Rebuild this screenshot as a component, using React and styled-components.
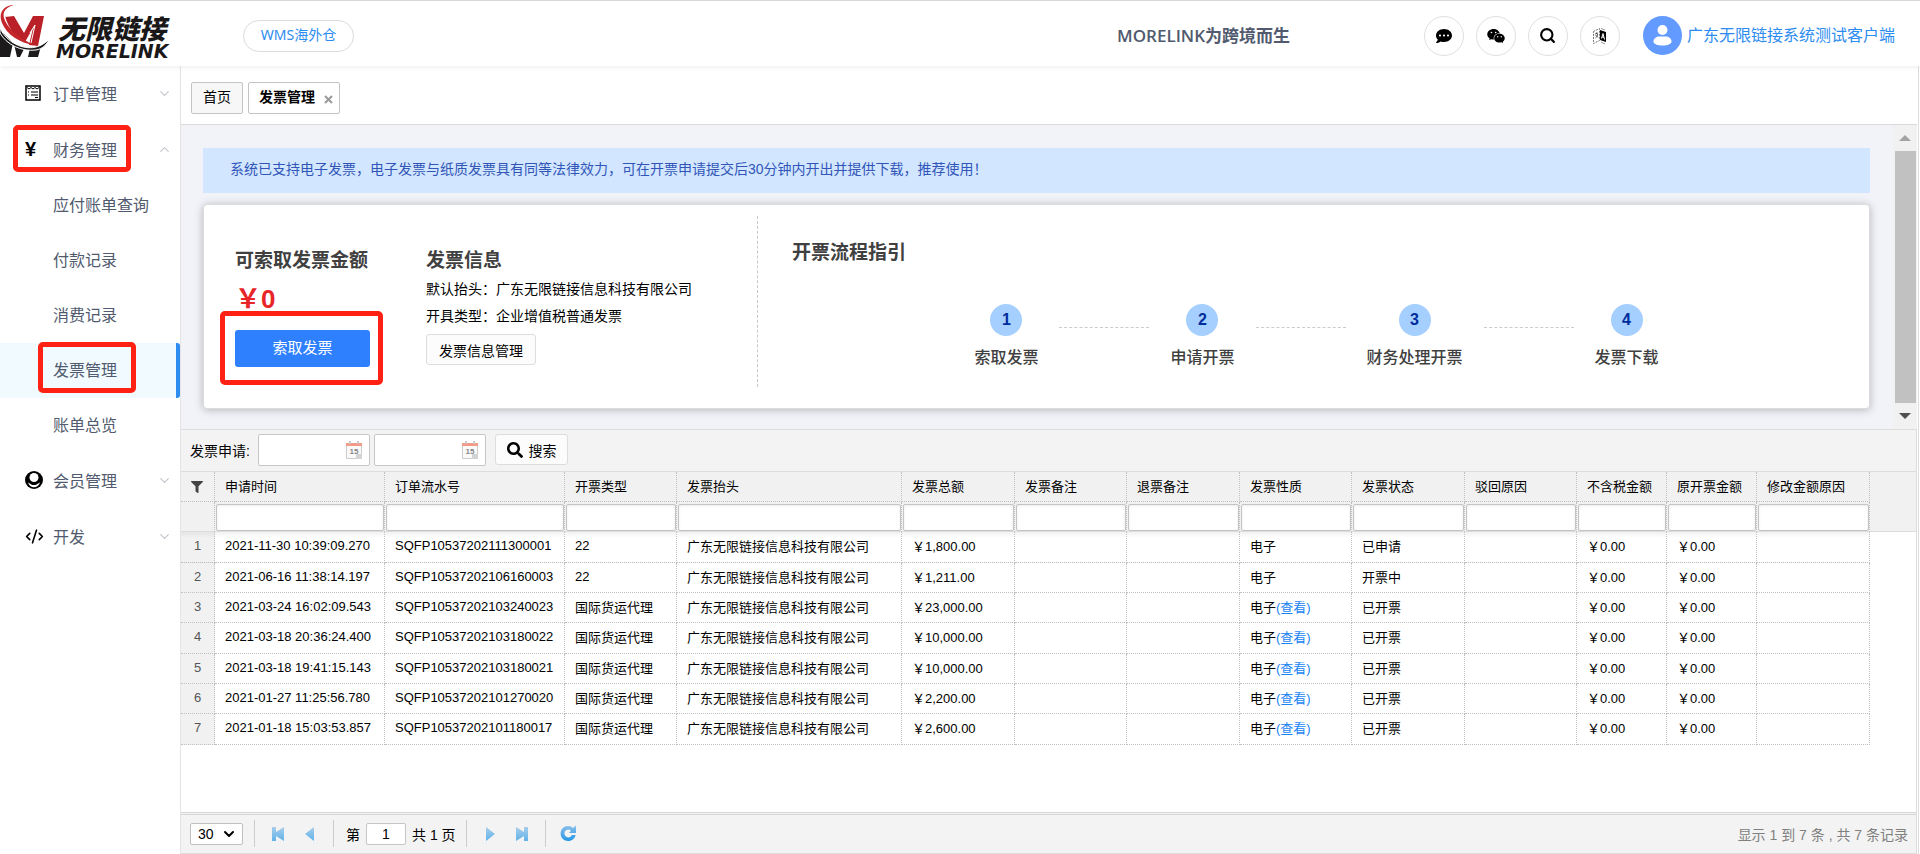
import React from 'react'
import styled, { createGlobalStyle } from 'styled-components'
import { FaCommentDots, FaFilter, FaSearch } from 'react-icons/fa'
import { AiFillWechat } from 'react-icons/ai'
import { ChevronDown, ChevronUp, CodeXml, Search } from 'lucide-react'

const GlobalStyle = createGlobalStyle `
  * {
    box-sizing: border-box;
  }

  body {
    margin: 0;
    background-color: #ffffff;
    color: #000000;
    font-family: "Liberation Sans", "Noto Sans CJK SC", sans-serif;
    font-size: 14px;
  }

  button, input, select {
    font-family: inherit;
    font-size: 14px;
    color: inherit;
  }

  h1, h2, p, ul, ol {
    margin: 0;
    padding: 0;
  }

  ul, ol {
    list-style: none;
  }

  a {
    text-decoration: none;
  }
`

const Page = styled.div `
  display: flex;
  flex-direction: column;
  min-height: 100vh;
`

const Header = styled.header `
  display: flex;
  align-items: center;
  height: 66px;
  padding-right: 25px;
  border-top: 1px solid #d8d8d8;
  position: relative;
  z-index: 1;
  box-shadow: 0 3px 3px rgba(0, 0, 0, 0.04);
  background-color: #ffffff;
`

const Logo = styled.svg `
  display: block;
  width: 176px;
  height: 64px;
`

const WmsLink = styled.a `
  margin-top: 4px;
  margin-left: 67px;
  width: 111px;
  height: 32px;
  line-height: 28px;
  border: 1px solid #dcdcdc;
  border-radius: 16px;
  text-align: center;
  color: #2d8cf0;
  font-family: "Noto Sans", "Noto Sans CJK SC", sans-serif;
`

const Slogan = styled.strong `
  margin-left: auto;
  margin-right: 134px;
  margin-top: 2px;
  font-family: "Open Sans", "Noto Sans CJK SC", sans-serif;
  font-size: 17px;
  font-weight: 600;
  color: #515a6e;
`

const Tools = styled.div `
  display: flex;
  gap: 12px;
  margin-top: 4px;
`

const ToolButton = styled.button `
  display: flex;
  align-items: center;
  justify-content: center;
  width: 40px;
  height: 40px;
  padding: 0;
  border: 1px solid #dfdfdf;
  border-radius: 50%;
  background-color: #ffffff;
`

const Account = styled.a `
  display: flex;
  align-items: center;
  gap: 5px;
  margin-left: 23px;
  margin-top: 4px;
  font-size: 16px;
  line-height: 24px;
  color: #2d8cf0;

  svg {
    display: block;
  }
`

const Body = styled.div `
  display: flex;
  flex: 1;
`

const Sidebar = styled.nav `
  flex: none;
  width: 180px;
`

const MenuLink = styled.a `
  display: flex;
  align-items: center;
  position: relative;
  height: ${props => props.$sub ? '55px' : '56px'};
  padding: ${props => props.$sub ? '0 9px 4px 53px' : '0 8px 2px 25px'};
  border-right: ${props => props.$active ? '4px solid #2d8cf0' : 'none'};
  border-radius: ${props => props.$active ? '0 3px 3px 0' : '0'};
  background-color: ${props => props.$active ? '#f0faff' : 'transparent'};
  color: #515a6e;
  font-size: 16px;
`

const MenuIcon = styled.span `
  display: flex;
  flex: none;
  width: 28px;
  color: #000000;
  font-size: 20px;
  font-weight: 700;
`

const MenuArrow = styled.span `
  display: flex;
  margin-left: auto;
  color: #c5c8ce;
`

const Mark = styled.span `
  position: absolute;
  top: ${props => props.$top};
  left: ${props => props.$left};
  width: ${props => props.$width};
  height: ${props => props.$height};
  border: 5px solid #ff2113;
  border-radius: 5px;
  pointer-events: none;
`

const Main = styled.main `
  display: flex;
  flex: 1;
  flex-direction: column;
  min-width: 0;
  border-left: 1px solid #e4e4e4;
  border-right: 1px solid #dddddd;
  margin-right: 1px;
  padding-right: 1px;
`

const Tabs = styled.div `
  display: flex;
  gap: 5px;
  padding: 16px 10px 10px;
  border-bottom: 1px solid #dadada;
`

const Tab = styled.button `
  display: flex;
  align-items: center;
  gap: 9px;
  height: 32px;
  padding: ${props => props.$active ? '0 6px 4px 10px' : '0 11px 4px'};
  border: 1px solid #c4c4c4;
  border-radius: 2px;
  background-color: ${props => props.$active ? '#ffffff' : '#f7f7f7'};
  font-weight: ${props => props.$active ? 700 : 400};

  svg {
    margin-top: 7px;
  }
`

const ScrollPanel = styled.section `
  display: flex;
  background-color: #f1f3f8;
`

const PanelContent = styled.div `
  flex: 1;
  padding: 23px 23px 20px 22px;
`

const Notice = styled.p `
  height: 45px;
  margin-bottom: 11px;
  padding-left: 27px;
  line-height: 43px;
  background-color: #d2e6ff;
  color: #3156b8;
`

const Card = styled.div `
  display: flex;
  height: 205px;
  padding: 11px 0;
  border: 1px solid #dcdcdc;
  border-radius: 4px;
  background-color: #ffffff;
  box-shadow: 0 1px 8px rgba(0, 0, 0, 0.25);
`

const Summary = styled.div `
  display: flex;
  height: 171px;
  width: 554px;
  padding: 31px 0 0 31px;
  border-right: 1px dashed #c8c8c8;
`

const Amount = styled.div `
  width: 191px;
`

const Title = styled.h2 `
  font-size: 19px;
  line-height: 28px;
  color: #404040;
`

const Money = styled.p `
  margin: 6px 0 13px;
  font-size: 26px;
  font-weight: 700;
  line-height: 36px;
  color: #e8262a;
`

const ClaimWrapper = styled.div `
  position: relative;
`

const ClaimButton = styled.button `
  display: block;
  width: 135px;
  height: 37px;
  padding: 0 0 4px;
  border: none;
  border-radius: 3px;
  background-color: #2f80ff;
  color: #ffffff;
  font-size: 15px;
`

const InfoLines = styled.div `
  margin: 1px 0 4px;
  line-height: 27px;
`

const PlainButton = styled.button `
  display: flex;
  align-items: center;
  justify-content: center;
  gap: 6px;
  width: ${props => props.$width};
  height: 31px;
  padding: 0;
  border: 1px solid #dddddd;
  border-radius: 3px;
  background-color: #fcfcfc;
`

const Guide = styled.div `
  flex: 1;
  padding-top: 23px;

  h2 {
    padding-left: 34px;
  }
`

const Steps = styled.ol `
  display: flex;
  justify-content: center;
  gap: 21px;
  margin-top: 37px;
  padding-left: 6px;
`

const Step = styled.li `
  display: flex;
  flex-direction: column;
  align-items: center;
  gap: 10px;
  font-size: 16px;
  font-weight: 500;
  line-height: 24px;
  color: #404040;
`

const StepNumber = styled.span `
  width: 32px;
  height: 32px;
  border-radius: 50%;
  background-color: #a5cfff;
  color: #002c9c;
  font-weight: 700;
  line-height: 31px;
  text-align: center;
`

const StepLine = styled.li `
  width: 90px;
  margin-top: 23px;
  border-top: 1px dashed #cccccc;
`

const ScrollBar = styled.div `
  display: flex;
  flex-direction: column;
  align-items: center;
  width: 24px;
  background-color: #f1f1f1;
`

const ScrollArrow = styled.span `
  display: flex;
  align-items: center;
  justify-content: center;
  height: 26px;
`

const ScrollThumb = styled.span `
  flex: 1;
  width: 21px;
  background-color: #c1c1c1;
`

const GridPanel = styled.section `
  display: flex;
  flex: 1;
  flex-direction: column;
  border-right: 1px solid #dddddd;
`

const SearchBar = styled.form `
  display: flex;
  align-items: center;
  height: 43px;
  padding: 0 9px 2px;
  border-top: 1px solid #dddddd;
  border-bottom: 1px solid #dddddd;
  background-color: #f3f3f3;
`

const DateLabel = styled.label `
  width: 68px;
`

const DateBox = styled.div `
  display: flex;
  align-items: center;
  width: 112px;
  height: 32px;
  margin-right: ${props => props.$last ? '9px' : '4px'};
  padding-right: 7px;
  border: 1px solid #c6c6c6;
  border-radius: 2px;
  background-color: #ffffff;
`

const DateInput = styled.input `
  flex: 1;
  min-width: 0;
  border: none;
  outline: none;
  background: none;
`

const Table = styled.table `
  width: 100%;
  table-layout: fixed;
  border-collapse: separate;
  border-spacing: 0;
  font-size: 13px;
`

const HeadCell = styled.th `
  height: 30px;
  padding: 0 0 3px 10px;
  border-right: ${props => props.$filler ? 'none' : '1px dotted #c0c0c0'};
  border-bottom: ${props => props.$filler ? 'none' : '1px dotted #c0c0c0'};
  background-color: #f1f1f1;
  font-weight: 400;
  text-align: left;
  white-space: nowrap;

  svg {
    vertical-align: -4px;
  }
`

const FilterCell = styled.td `
  height: 30px;
  padding: 1px 0 0 1px;
  border-right: ${props => props.$filler ? 'none' : '1px dotted #c0c0c0'};
  border-bottom: 1px solid #dddddd;
  background-color: #f1f1f1;
`

const FilterInput = styled.input `
  display: block;
  width: 100%;
  height: 27px;
  border: 1px solid #c4c4c4;
  border-radius: 2px;
  background-color: #ffffff;
  box-shadow: inset 0 1px 3px rgba(0, 0, 0, 0.08);
`

const Row = styled.tr `
  height: 30px;

  &:nth-child(3n + 1) {
    height: 31px;
  }

  &:first-child td {
    background-image: linear-gradient(rgba(0, 0, 0, 0.05), transparent 6px);
  }
`

const Cell = styled.td `
  padding: 0 0 3px 10px;
  border-right: 1px dotted #c0c0c0;
  border-bottom: 1px dotted #c0c0c0;
  white-space: nowrap;
`

const NumberCell = styled(Cell) `
  padding-left: 0;
  background-color: #f1f1f1;
  color: #555555;
  text-align: center;
`

const ViewLink = styled.a `
  color: #1a84f5;
`

const Pager = styled.footer `
  display: flex;
  align-items: center;
  height: 42px;
  margin-top: auto;
  padding: 0 8px 1px 9px;
  border-top: 3px double #d6d6d6;
  border-bottom: 1px solid #dddddd;
  background-color: #f3f3f3;
`

const PageSize = styled.span `
  display: flex;
  align-items: center;
  position: relative;
  margin-right: 4px;

  svg {
    position: absolute;
    right: 6px;
    pointer-events: none;
  }
`

const SizeSelect = styled.select `
  appearance: none;
  width: 53px;
  height: 22px;
  padding: 0 0 0 7px;
  border: 1px solid #c0c0c0;
  border-radius: 2px;
  background-color: #ffffff;
`

const Divider = styled.span `
  width: 1px;
  height: 27px;
  margin: 0 7px;
  background-color: #cccccc;
`

const PageButton = styled.button `
  display: flex;
  align-items: center;
  justify-content: center;
  width: 32px;
  height: 26px;
  padding: 0;
  border: none;
  background: none;
`

const PageJump = styled.div `
  display: flex;
  align-items: center;
  gap: 6px;
  padding: 0 3px 0 5px;
`

const PageInput = styled.input `
  width: 40px;
  height: 22px;
  padding: 0;
  border: 1px solid #c6c6c6;
  border-radius: 2px;
  text-align: center;
`

const Total = styled.span `
  margin-left: auto;
  color: #808080;
`

const columns = [
  { name: '申请时间', width: 170 },
  { name: '订单流水号', width: 180 },
  { name: '开票类型', width: 112 },
  { name: '发票抬头', width: 225 },
  { name: '发票总额', width: 113 },
  { name: '发票备注', width: 112 },
  { name: '退票备注', width: 113 },
  { name: '发票性质', width: 112 },
  { name: '发票状态', width: 113 },
  { name: '驳回原因', width: 112 },
  { name: '不含税金额', width: 90 },
  { name: '原开票金额', width: 90 },
  { name: '修改金额原因', width: 113 },
]

const invoices = [
  { time: '2021-11-30 10:39:09.270', serial: 'SQFP10537202111300001', type: '22', total: '￥1,800.00', status: '已申请' },
  { time: '2021-06-16 11:38:14.197', serial: 'SQFP10537202106160003', type: '22', total: '￥1,211.00', status: '开票中' },
  { time: '2021-03-24 16:02:09.543', serial: 'SQFP10537202103240023', type: '国际货运代理', total: '￥23,000.00', status: '已开票', view: true },
  { time: '2021-03-18 20:36:24.400', serial: 'SQFP10537202103180022', type: '国际货运代理', total: '￥10,000.00', status: '已开票', view: true },
  { time: '2021-03-18 19:41:15.143', serial: 'SQFP10537202103180021', type: '国际货运代理', total: '￥10,000.00', status: '已开票', view: true },
  { time: '2021-01-27 11:25:56.780', serial: 'SQFP10537202101270020', type: '国际货运代理', total: '￥2,200.00', status: '已开票', view: true },
  { time: '2021-01-18 15:03:53.857', serial: 'SQFP10537202101180017', type: '国际货运代理', total: '￥2,600.00', status: '已开票', view: true },
]

const steps = ['索取发票', '申请开票', '财务处理开票', '发票下载']

const OrderIcon = () => (
  <svg width='16' height='16' viewBox='0 0 16 16' fill='none' stroke='#000000'>
    <path d='M1 1h14v14H1z' strokeWidth='1.5' />
    <path d='M2 2.5l2 1.5 2-1.5 2 1.5 2-1.5 2 1.5 2-1.5M3 7h1M6 7h7M3 10h1M6 10h7M10 12.5h3' />
  </svg>
)

const MemberIcon = () => (
  <svg width='18' height='18' viewBox='0 0 18 18'>
    <circle cx='9' cy='9' r='9' fill='#000000' />
    <circle cx='9' cy='6.5' r='4.5' fill='#ffffff' />
    <path d='M3 11.5c1.500.2 2.500 2.500 6 2.500s4.500-2.300 6-2.500C14 14.500 11.800 16.300 9 16.300S4 14.500 3 11.500z' fill='#ffffff' />
  </svg>
)

const TranslateIcon = () => (
  <svg width='16' height='18' viewBox='0 0 16 18'>
    <path d='M1.500 4.500l6-3v12l-6 3z' fill='#ffffff' stroke='#777777' strokeDasharray='2 1' />
    <path d='M3 7l3-1M4.500 5.500v1.500M3.500 11c1.500-1 2-2.500 2-4M3.500 8l2.500 2.500' stroke='#555555' fill='none' />
    <path d='M8 3l6 2v10l-6-2z' fill='#000000' />
    <path d='M9.500 11.500l1.500-5 1.500 6M10 9.800l2 .6' stroke='#ffffff' fill='none' />
    <path d='M9 1.500l4 1.500M9 15l4 2' stroke='#999999' fill='none' />
  </svg>
)

const AvatarIcon = () => (
  <svg width='39' height='39' viewBox='0 0 39 39'>
    <circle cx='19.500' cy='19.500' r='19.500' fill='#629aff' />
    <circle cx='19.500' cy='14' r='5' fill='#ffffff' />
    <path d='M10.500 25.500c0-3 3-5 5.500-5h7c2.500 0 5.500 2 5.500 5 0 2.500-4 4-9 4s-9-1.500-9-4z' fill='#ffffff' />
  </svg>
)

const CalendarIcon = () => (
  <svg width='16' height='18' viewBox='0 0 16 18'>
    <path d='M.5 3.500h15v14H.5z' fill='#fafafa' stroke='#cccccc' />
    <path d='M0 2h16v3H0z' fill='#f29a88' />
    <path d='M3 0h2v3H3zM11 0h2v3h-2z' fill='#c8c8c8' />
    <path d='M10 13h6v5h-6z' fill='#d4d4d4' />
    <text x='8' y='13' fontSize='8' fontWeight='700' textAnchor='middle' fill='#888888'>15</text>
  </svg>
)

const arrowShapes = {
  first: 'M0 1h4v5l8-5v14l-8-5v5H0z',
  prev: 'M10 1v14L1 8z',
  next: 'M2 1v14l9-7z',
  last: 'M12 1H8v5L0 1v14l8-5v5h4z',
}

const ArrowIcon = ({ shape }) => (
  <svg width='12' height='16' viewBox='0 0 12 16'>
    <defs>
      <linearGradient id={`arrow-${shape}`} x1='0' y1='0' x2='0' y2='1'>
        <stop offset='0' stopColor='#a9cdea' />
        <stop offset='1' stopColor='#5fb2ea' />
      </linearGradient>
    </defs>
    <path d={arrowShapes[shape]} fill={`url(#arrow-${shape})`} />
  </svg>
)

const RefreshIcon = () => (
  <svg width='17' height='17' viewBox='0 0 17 17'>
    <defs>
      <linearGradient id='refresh' x1='0' y1='0' x2='0' y2='1'>
        <stop offset='0' stopColor='#8cc0ea' />
        <stop offset='1' stopColor='#2196e8' />
      </linearGradient>
    </defs>
    <path d='M8 1c2 0 3.800.8 5 2l3-2.500V8H9l2-2.200C10.200 5 9.200 4.600 8.200 4.600 6 4.600 4.400 6.300 4.400 8.500s1.700 3.900 3.800 3.900c1.700 0 3-.9 3.600-2.400h3.900c-.8 3.600-3.800 6-7.500 6C3.900 16 .6 12.700.6 8.500S3.900 1 8 1z' fill='url(#refresh)' />
  </svg>
)

const MenuGroup = ({ icon, name, open, children }) => (
  <li>
    <MenuLink href='#'>
      <MenuIcon>{icon}</MenuIcon>
      {name}
      <MenuArrow>{open ? <ChevronUp size={15} /> : <ChevronDown size={15} />}</MenuArrow>
      {open && <Mark $top='3px' $left='13px' $width='118px' $height='47px' />}
    </MenuLink>
    {children}
  </li>
)

const App = () => (
  <Page>
    <GlobalStyle />
    <Header>
      <Logo viewBox='0 0 176 64' role='img' aria-label='MORELINK'>
        <path d='M0 28l13 13-3 14H0zM14 42l10 5-4 8h-3zM30 46l11-2-3 11H28z' fill='#1c1a1b' />
        <path d='M5 15l9-1 10 17 9-17h11l-6 30-9-1 4-17-8 14c-9-5-16-12-20-26z' fill='#b92027' />
        <path d='M14 3C3 3-2 12 2 21c5 12 18 20 32 22C19 36 7 26 4 16 2 9 7 5 14 3z' fill='#c5262c' />
        <path d='M0 26c8 18 34 28 49 11-2 6-7 10-13 11C21 50 6 42 0 31z' fill='#1c1a1b' stroke='#ffffff' />
        <path d='M30 31l5-8-4 18' fill='none' stroke='#ffffff' />
        <text x='58' y='37' fontFamily='Noto Sans CJK SC' fontSize='27' fontWeight='900' fontStyle='italic' fill='#1a1819'>无限链接</text>
        <text x='56' y='56' fontFamily='DejaVu Sans' fontSize='19' fontWeight='700' fontStyle='italic' fill='#1a1819'>MORELINK</text>
      </Logo>
      <WmsLink href='#'>WMS海外仓</WmsLink>
      <Slogan>MORELINK为跨境而生</Slogan>
      <Tools>
        <ToolButton aria-label='消息'><FaCommentDots size={16} /></ToolButton>
        <ToolButton aria-label='微信'><AiFillWechat size={20} /></ToolButton>
        <ToolButton aria-label='搜索'><Search size={17} strokeWidth={3} /></ToolButton>
        <ToolButton aria-label='语言'><TranslateIcon /></ToolButton>
      </Tools>
      <Account href='#'>
        <AvatarIcon />
        广东无限链接系统测试客户端
      </Account>
    </Header>
    <Body>
      <Sidebar>
        <ul>
          <MenuGroup icon={<OrderIcon />} name='订单管理' />
          <MenuGroup icon='¥' name='财务管理' open>
            <ul>
              <li><MenuLink href='#' $sub>应付账单查询</MenuLink></li>
              <li><MenuLink href='#' $sub>付款记录</MenuLink></li>
              <li><MenuLink href='#' $sub>消费记录</MenuLink></li>
              <li>
                <MenuLink href='#' $sub $active>
                  发票管理
                  <Mark $top='-1px' $left='38px' $width='98px' $height='51px' />
                </MenuLink>
              </li>
              <li><MenuLink href='#' $sub>账单总览</MenuLink></li>
            </ul>
          </MenuGroup>
          <MenuGroup icon={<MemberIcon />} name='会员管理' />
          <MenuGroup icon={<CodeXml size={19} />} name='开发' />
        </ul>
      </Sidebar>
      <Main>
        <Tabs>
          <Tab>首页</Tab>
          <Tab $active>
            发票管理
            <svg width='9' height='9' viewBox='0 0 9 9' stroke='#999999' strokeWidth='2'>
              <path d='M1 1l7 7M8 1L1 8' />
            </svg>
          </Tab>
        </Tabs>
        <ScrollPanel>
          <PanelContent>
            <Notice>系统已支持电子发票，电子发票与纸质发票具有同等法律效力，可在开票申请提交后30分钟内开出并提供下载，推荐使用！</Notice>
            <Card>
              <Summary>
                <Amount>
                  <Title>可索取发票金额</Title>
                  <Money>￥0</Money>
                  <ClaimWrapper>
                    <ClaimButton>索取发票</ClaimButton>
                    <Mark $top='-19px' $left='-15px' $width='163px' $height='74px' />
                  </ClaimWrapper>
                </Amount>
                <div>
                  <Title>发票信息</Title>
                  <InfoLines>
                    <p>默认抬头：广东无限链接信息科技有限公司</p>
                    <p>开具类型：企业增值税普通发票</p>
                  </InfoLines>
                  <PlainButton $width='110px'>发票信息管理</PlainButton>
                </div>
              </Summary>
              <Guide>
                <Title>开票流程指引</Title>
                <Steps>
                  {steps.map((name, i) => (
                    <React.Fragment key={name}>
                      {i > 0 && <StepLine aria-hidden='true' />}
                      <Step>
                        <StepNumber>{i + 1}</StepNumber>
                        {name}
                      </Step>
                    </React.Fragment>
                  ))}
                </Steps>
              </Guide>
            </Card>
          </PanelContent>
          <ScrollBar aria-hidden='true'>
            <ScrollArrow>
              <svg width='12' height='6' viewBox='0 0 12 6'><path d='M6 0l6 6H0z' fill='#a3a3a3' /></svg>
            </ScrollArrow>
            <ScrollThumb />
            <ScrollArrow>
              <svg width='12' height='6' viewBox='0 0 12 6'><path d='M6 6l6-6H0z' fill='#505050' /></svg>
            </ScrollArrow>
          </ScrollBar>
        </ScrollPanel>
        <GridPanel>
          <SearchBar>
            <DateLabel htmlFor='date-from'>发票申请:</DateLabel>
            <DateBox>
              <DateInput id='date-from' />
              <CalendarIcon />
            </DateBox>
            <DateBox $last>
              <DateInput aria-label='结束时间' />
              <CalendarIcon />
            </DateBox>
            <PlainButton type='button' $width='73px'>
              <FaSearch size={16} />
              搜索
            </PlainButton>
          </SearchBar>
          <Table>
            <colgroup>
              <col width='34' />
              {columns.map(column => <col key={column.name} width={column.width} />)}
              <col />
            </colgroup>
            <thead>
              <tr>
                <HeadCell aria-label='筛选'><FaFilter size={12} color='#444444' /></HeadCell>
                {columns.map(column => <HeadCell key={column.name}>{column.name}</HeadCell>)}
                <HeadCell $filler />
              </tr>
              <tr>
                <FilterCell />
                {columns.map(column => (
                  <FilterCell key={column.name}>
                    <FilterInput aria-label={column.name} />
                  </FilterCell>
                ))}
                <FilterCell $filler />
              </tr>
            </thead>
            <tbody>
              {invoices.map((invoice, i) => (
                <Row key={invoice.serial}>
                  <NumberCell>{i + 1}</NumberCell>
                  <Cell>{invoice.time}</Cell>
                  <Cell>{invoice.serial}</Cell>
                  <Cell>{invoice.type}</Cell>
                  <Cell>广东无限链接信息科技有限公司</Cell>
                  <Cell>{invoice.total}</Cell>
                  <Cell />
                  <Cell />
                  <Cell>电子{invoice.view && <ViewLink href='#'>(查看)</ViewLink>}</Cell>
                  <Cell>{invoice.status}</Cell>
                  <Cell />
                  <Cell>￥0.00</Cell>
                  <Cell>￥0.00</Cell>
                  <Cell />
                </Row>
              ))}
            </tbody>
          </Table>
          <Pager>
            <PageSize>
              <SizeSelect aria-label='每页条数' defaultValue='30'>
                <option>30</option>
              </SizeSelect>
              <ChevronDown size={16} strokeWidth={3} />
            </PageSize>
            <Divider />
            <PageButton aria-label='首页'><ArrowIcon shape='first' /></PageButton>
            <PageButton aria-label='上一页'><ArrowIcon shape='prev' /></PageButton>
            <Divider />
            <PageJump>
              <label htmlFor='page-number'>第</label>
              <PageInput id='page-number' defaultValue='1' />
              <span>共 1 页</span>
            </PageJump>
            <Divider />
            <PageButton aria-label='下一页'><ArrowIcon shape='next' /></PageButton>
            <PageButton aria-label='末页'><ArrowIcon shape='last' /></PageButton>
            <Divider />
            <PageButton aria-label='刷新'><RefreshIcon /></PageButton>
            <Total>显示 1 到 7 条 , 共 7 条记录</Total>
          </Pager>
        </GridPanel>
      </Main>
    </Body>
  </Page>
)

export default App
